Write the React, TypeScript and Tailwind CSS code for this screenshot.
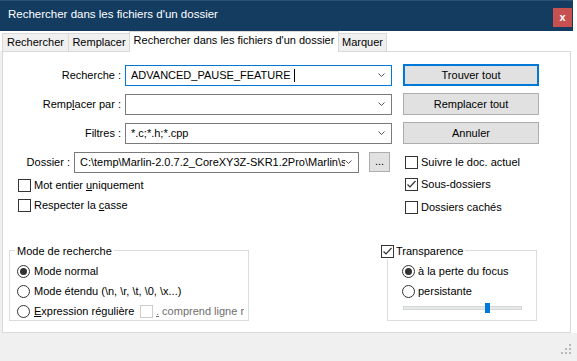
import { ReactNode } from 'react';

function CheckBox({ checked = false, disabled = false }: { checked?: boolean; disabled?: boolean }) {
  return (
    <span
      className={`flex h-[13px] w-[13px] shrink-0 items-center justify-center border bg-white ${
        disabled ? 'border-[#cccccc]' : 'border-[#333333]'
      }`}
    >
      {checked && (
        <svg width="11" height="11" viewBox="0 0 11 11">
          <path d="M1.5 5.5 L4 8 L9.5 2" fill="none" stroke="#333333" strokeWidth="1.2" />
        </svg>
      )}
    </span>
  );
}

function Radio({ checked = false }: { checked?: boolean }) {
  return (
    <span className="flex h-[13px] w-[13px] shrink-0 items-center justify-center rounded-full border border-[#333333] bg-white">
      {checked && <span className="h-[7px] w-[7px] rounded-full bg-[#333333]" />}
    </span>
  );
}

function Chevron() {
  return (
    <svg width="7" height="4" viewBox="0 0 7 4" className="shrink-0">
      <path d="M0.5 0.5 L3.5 3.5 L6.5 0.5" fill="none" stroke="#555555" strokeWidth="1" />
    </svg>
  );
}

function Combo({ children, focused = false, className = '' }: { children?: ReactNode; focused?: boolean; className?: string }) {
  return (
    <div
      className={`flex h-[21px] items-center border bg-white pl-[5px] pr-[6px] ${
        focused ? 'border-[#0078d7]' : 'border-[#7a7a7a]'
      } ${className}`}
    >
      <div className="flex flex-1 items-center overflow-hidden whitespace-nowrap">{children}</div>
      <Chevron />
    </div>
  );
}

function Button({ label, focused = false }: { label: string; focused?: boolean }) {
  return (
    <div
      className={`flex h-[22px] w-[136px] items-center justify-center bg-[#e1e1e1] ${
        focused ? 'border-2 border-[#0078d7]' : 'border border-[#adadad]'
      }`}
    >
      {label}
    </div>
  );
}

function Tab({ label, width }: { label: string; width: string }) {
  return (
    <div className={`-ml-px flex h-[18px] items-center justify-center border border-b-0 border-[#d9d9d9] bg-[#f0f0f0] ${width}`}>
      {label}
    </div>
  );
}

export default function App() {
  return (
    <div className="h-[361px] w-[577px] overflow-hidden bg-white font-['Liberation_Sans',Arial,sans-serif] text-[11px] leading-none text-black">
      {/* title bar */}
      <div className="flex h-[31px] w-[573px] items-start justify-between border-t border-[#2b5277] bg-[#143c61] pl-[8px] pr-[1px]">
        <span className="mt-[8px] text-[11.5px] text-white">Rechercher dans les fichiers d'un dossier</span>
        <span className="mt-[7px] flex h-[19px] w-[19px] items-center justify-center bg-[#c75050] text-[11px] font-bold text-white">
          x
        </span>
      </div>

      {/* tabs */}
      <div className="relative z-10 flex h-[20px] items-end pl-[3px]">
        <Tab label="Rechercher" width="w-[67px]" />
        <Tab label="Remplacer" width="w-[62px]" />
        <div className="-mb-px -ml-px flex h-[21px] w-[210px] items-center justify-center border border-b-0 border-[#d9d9d9] bg-white pb-[3px]">
          Rechercher dans les fichiers d'un dossier
        </div>
        <Tab label="Marquer" width="w-[49px]" />
      </div>

      {/* panel */}
      <div className="flex h-[282px]">
        <div className="w-[2px] bg-[#f0f0f0]" />
        <div className="flex w-[569px] flex-col border border-[#d9d9d9] bg-white pt-[12px]">
          <div className="flex flex-col gap-[7px]">
            <div className="flex h-[22px] items-center">
              <span className="w-[118px] text-right">Recherche :</span>
              <Combo focused className="ml-[4px] w-[267px]">
                <span>ADVANCED_PAUSE_FEATURE&nbsp;</span>
                <span className="h-[13px] w-px bg-black" />
              </Combo>
              <div className="ml-[11px]">
                <Button label="Trouver tout" focused />
              </div>
            </div>
            <div className="flex h-[22px] items-center">
              <span className="w-[118px] text-right">
                Remp<u>l</u>acer par :
              </span>
              <Combo className="ml-[4px] w-[267px]" />
              <div className="ml-[11px]">
                <Button label="Remplacer tout" />
              </div>
            </div>
            <div className="flex h-[22px] items-center">
              <span className="w-[118px] text-right">Filtres :</span>
              <Combo className="ml-[4px] w-[267px]">
                <span>*.c;*.h;*.cpp</span>
              </Combo>
              <div className="ml-[11px]">
                <Button label="Annuler" />
              </div>
            </div>
            <div className="flex h-[22px] items-center">
              <span className="w-[67px] text-right">Dossier :</span>
              <Combo className="ml-[4px] w-[285px] pr-[4px]">
                <span>C:\temp\Marlin-2.0.7.2_CoreXY3Z-SKR1.2Pro\Marlin\s</span>
              </Combo>
              <div className="ml-[10px] flex h-[20px] w-[21px] items-end justify-center border border-[#adadad] bg-[#e1e1e1] pb-[4px]">
                ...
              </div>
              <div className="ml-[15px] flex items-center gap-[3px]">
                <CheckBox />
                <span>Suivre le doc. actuel</span>
              </div>
            </div>
          </div>

          {/* options */}
          <div className="flex">
            <div className="ml-[15px] flex w-[387px] flex-col pt-[2px]">
              <div className="flex h-[20px] items-center gap-[3px]">
                <CheckBox />
                <span>
                  Mot entier <u>u</u>niquement
                </span>
              </div>
              <div className="flex h-[20px] items-center gap-[3px]">
                <CheckBox />
                <span>
                  Respecter la <u>c</u>asse
                </span>
              </div>
            </div>
            <div className="flex flex-col">
              <div className="flex h-[23px] items-center gap-[3px]">
                <CheckBox checked />
                <span>Sous-dossiers</span>
              </div>
              <div className="flex h-[23px] items-center gap-[3px]">
                <CheckBox />
                <span>Dossiers cachés</span>
              </div>
            </div>
          </div>

          {/* group boxes */}
          <div className="mt-[31px] flex">
            <div className="relative ml-[6px] h-[71px] w-[240px] border border-[#dcdcdc] pl-[7px] pt-[10px]">
              <span className="absolute -top-[8px] left-[5px] bg-white px-[2px] leading-[16px]">Mode de recherche</span>
              <div className="flex h-[20px] items-center gap-[4px]">
                <Radio checked />
                <span>Mode normal</span>
              </div>
              <div className="flex h-[20px] items-center gap-[4px]">
                <Radio />
                <span>Mode étendu (\n, \r, \t, \0, \x...)</span>
              </div>
              <div className="flex h-[20px] items-center">
                <Radio />
                <span className="ml-[4px] w-[106px] whitespace-nowrap">
                  <u>E</u>xpression régulière
                </span>
                <CheckBox disabled />
                <span className="ml-[3px] w-[88px] overflow-hidden whitespace-nowrap text-[#6d6d6d]">
                  <u>.</u> comprend ligne n
                </span>
              </div>
            </div>

            <div className="relative ml-[138px] h-[71px] w-[150px] border border-[#dcdcdc] pl-[14px] pt-[10px]">
              <span className="absolute -top-[8px] -left-[7px] flex items-center gap-[2px] bg-white pr-[2px] leading-[16px]">
                <CheckBox checked />
                <span>Transparence</span>
              </span>
              <div className="flex h-[20px] items-center gap-[3px]">
                <Radio checked />
                <span>à la perte du focus</span>
              </div>
              <div className="flex h-[20px] items-center gap-[3px]">
                <Radio />
                <span>persistante</span>
              </div>
              <div className="relative h-[20px] pl-[1px] pt-[5px]">
                <div className="h-[4px] w-[119px] border border-[#d6d6d6] bg-[#e7eaea]" />
                <div className="absolute left-[83px] top-[2px] h-[10px] w-[5px] bg-[#0078d7]" />
              </div>
            </div>
          </div>
        </div>
        <div className="w-[6px]" />
      </div>

      {/* status strip */}
      <div className="relative h-[28px] bg-[#f0f0f0]">
        <svg width="12" height="12" viewBox="0 0 12 12" className="absolute bottom-[5px] right-[4px]">
          <rect x="8" y="0" width="2" height="2" fill="#b8b8b8" />
          <rect x="4" y="4" width="2" height="2" fill="#b8b8b8" />
          <rect x="8" y="4" width="2" height="2" fill="#b8b8b8" />
          <rect x="0" y="8" width="2" height="2" fill="#b8b8b8" />
          <rect x="4" y="8" width="2" height="2" fill="#b8b8b8" />
          <rect x="8" y="8" width="2" height="2" fill="#b8b8b8" />
        </svg>
      </div>
    </div>
  );
}
